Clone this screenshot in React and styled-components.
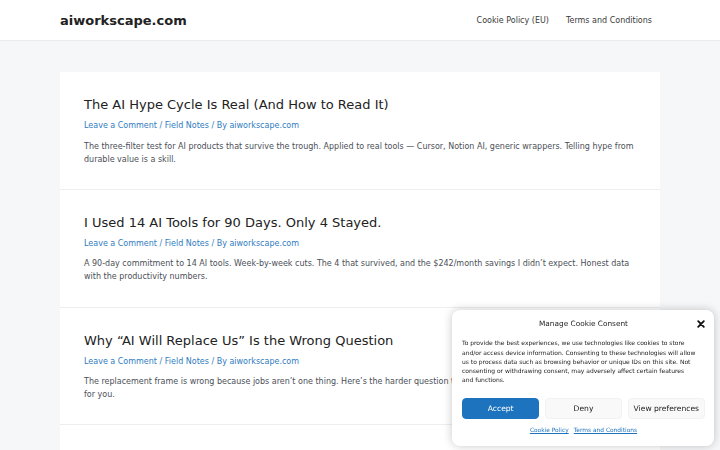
import React from "react";
import styled, { createGlobalStyle } from "styled-components";

const GlobalStyle = createGlobalStyle`
  html, body {
    margin: 0;
    padding: 0;
    background: #f6f7f9;
    font-family: "DejaVu Sans", "Noto Sans", sans-serif;
  }
  * { box-sizing: border-box; }
`;

const Header = styled.header`
  height: 41px;
  background: #ffffff;
  border-bottom: 1px solid #ececec;
  display: flex;
  align-items: center;
  justify-content: space-between;
  padding: 0 68px 0 60px;
`;

const Logo = styled.a`
  font-size: 13px;
  font-weight: 700;
  color: #222222;
  text-decoration: none;
`;

const Nav = styled.nav`
  display: flex;
  gap: 17px;
`;

const NavLink = styled.a`
  font-size: 8px;
  color: #3a3a3a;
  text-decoration: none;
`;

const Main = styled.main`
  padding: 31px 60px 0;
`;

const Feed = styled.div`
  background: #ffffff;
`;

const Article = styled.article`
  padding: 24px 24px 23.3px;
  border-bottom: 1.5px solid #eeeeee;
  display: flex;
  flex-direction: column;
`;

const Title = styled.h2`
  margin: 0;
  font-size: 13px;
  font-weight: 400;
  line-height: 17px;
  color: #222222;
`;

const Meta = styled.div`
  margin-top: 7px;
  font-size: 8px;
  line-height: 12px;
  color: #2f7bbf;
`;

const Excerpt = styled.p`
  margin: 7.5px 0 0;
  font-size: 8px;
  line-height: 13px;
  color: #4b4f58;
`;

const Banner = styled.div`
  position: fixed;
  right: 6px;
  bottom: 4px;
  width: 262px;
  background: #ffffff;
  border-radius: 8px;
  box-shadow: 0 0 10px rgba(0, 0, 0, 0.22);
  padding: 8px 9px 12px 10px;
  display: flex;
  flex-direction: column;
`;

const BannerHead = styled.div`
  position: relative;
  height: 10px;
  display: flex;
  align-items: center;
  justify-content: center;
`;

const BannerTitle = styled.div`
  font-size: 7.35px;
  color: #222222;
`;

const Close = styled.button`
  position: absolute;
  right: 0;
  top: 1px;
  width: 9px;
  height: 9px;
  padding: 0;
  border: 0;
  background: none;
  display: flex;
  align-items: center;
  justify-content: center;
`;

const BannerText = styled.p`
  margin: 10.4px 0 0;
  width: 235px;
  font-size: 6px;
  line-height: 9.2px;
  color: #222222;
`;

const Buttons = styled.div`
  margin-top: 13.5px;
  display: grid;
  grid-template-columns: repeat(3, 1fr);
  gap: 5.5px;
`;

const Button = styled.button`
  height: 21px;
  border-radius: 4px;
  font-family: inherit;
  font-size: 7.6px;
  padding: 0;
  border: 1px solid ${(p) => (p.$primary ? "#1e73be" : "#f2f2f2")};
  background: ${(p) => (p.$primary ? "#1e73be" : "#f9f9f9")};
  color: ${(p) => (p.$primary ? "#ffffff" : "#222222")};
`;

const Links = styled.div`
  margin-top: 7px;
  height: 8px;
  display: flex;
  align-items: center;
  justify-content: center;
  gap: 5px;
`;

const SmallLink = styled.a`
  font-size: 5.9px;
  color: #1e73be;
  text-decoration: underline;
`;

const posts = [
  {
    title: "The AI Hype Cycle Is Real (And How to Read It)",
    excerpt:
      "The three-filter test for AI products that survive the trough. Applied to real tools — Cursor, Notion AI, generic wrappers. Telling hype from durable value is a skill.",
  },
  {
    title: "I Used 14 AI Tools for 90 Days. Only 4 Stayed.",
    excerpt:
      "A 90-day commitment to 14 AI tools. Week-by-week cuts. The 4 that survived, and the $242/month savings I didn’t expect. Honest data with the productivity numbers.",
  },
  {
    title: "Why “AI Will Replace Us” Is the Wrong Question",
    excerpt:
      "The replacement frame is wrong because jobs aren’t one thing. Here’s the harder question to ask instead, and what it actually means for\u00a0you.",
  },
  {
    title: "Prompting Is a Skill You Can Actually Practice",
    excerpt: "",
  },
];

export default function App() {
  return (
    <>
      <GlobalStyle />
      <Header>
        <Logo href="#">aiworkscape.com</Logo>
        <Nav>
          <NavLink href="#">Cookie Policy (EU)</NavLink>
          <NavLink href="#">Terms and Conditions</NavLink>
        </Nav>
      </Header>
      <Main>
        <Feed>
          {posts.map((p) => (
            <Article key={p.title}>
              <Title>{p.title}</Title>
              <Meta>Leave a Comment / Field Notes / By aiworkscape.com</Meta>
              {p.excerpt && <Excerpt>{p.excerpt}</Excerpt>}
            </Article>
          ))}
        </Feed>
      </Main>
      <Banner>
        <BannerHead>
          <BannerTitle>Manage Cookie Consent</BannerTitle>
          <Close aria-label="close">
            <svg width="8" height="8" viewBox="0 0 10 10">
              <path d="M1.5 1.5 8.5 8.5 M8.5 1.5 1.5 8.5" stroke="#111" strokeWidth="2.3" strokeLinecap="round" />
            </svg>
          </Close>
        </BannerHead>
        <BannerText>
          To provide the best experiences, we use technologies like cookies to store and/or access device
          information. Consenting to these technologies will allow us to process data such as browsing behavior
          or unique IDs on this site. Not consenting or withdrawing consent, may adversely affect certain features
          and functions.
        </BannerText>
        <Buttons>
          <Button $primary>Accept</Button>
          <Button>Deny</Button>
          <Button>View preferences</Button>
        </Buttons>
        <Links>
          <SmallLink href="#">Cookie Policy</SmallLink>
          <SmallLink href="#">Terms and Conditions</SmallLink>
        </Links>
      </Banner>
    </>
  );
}
